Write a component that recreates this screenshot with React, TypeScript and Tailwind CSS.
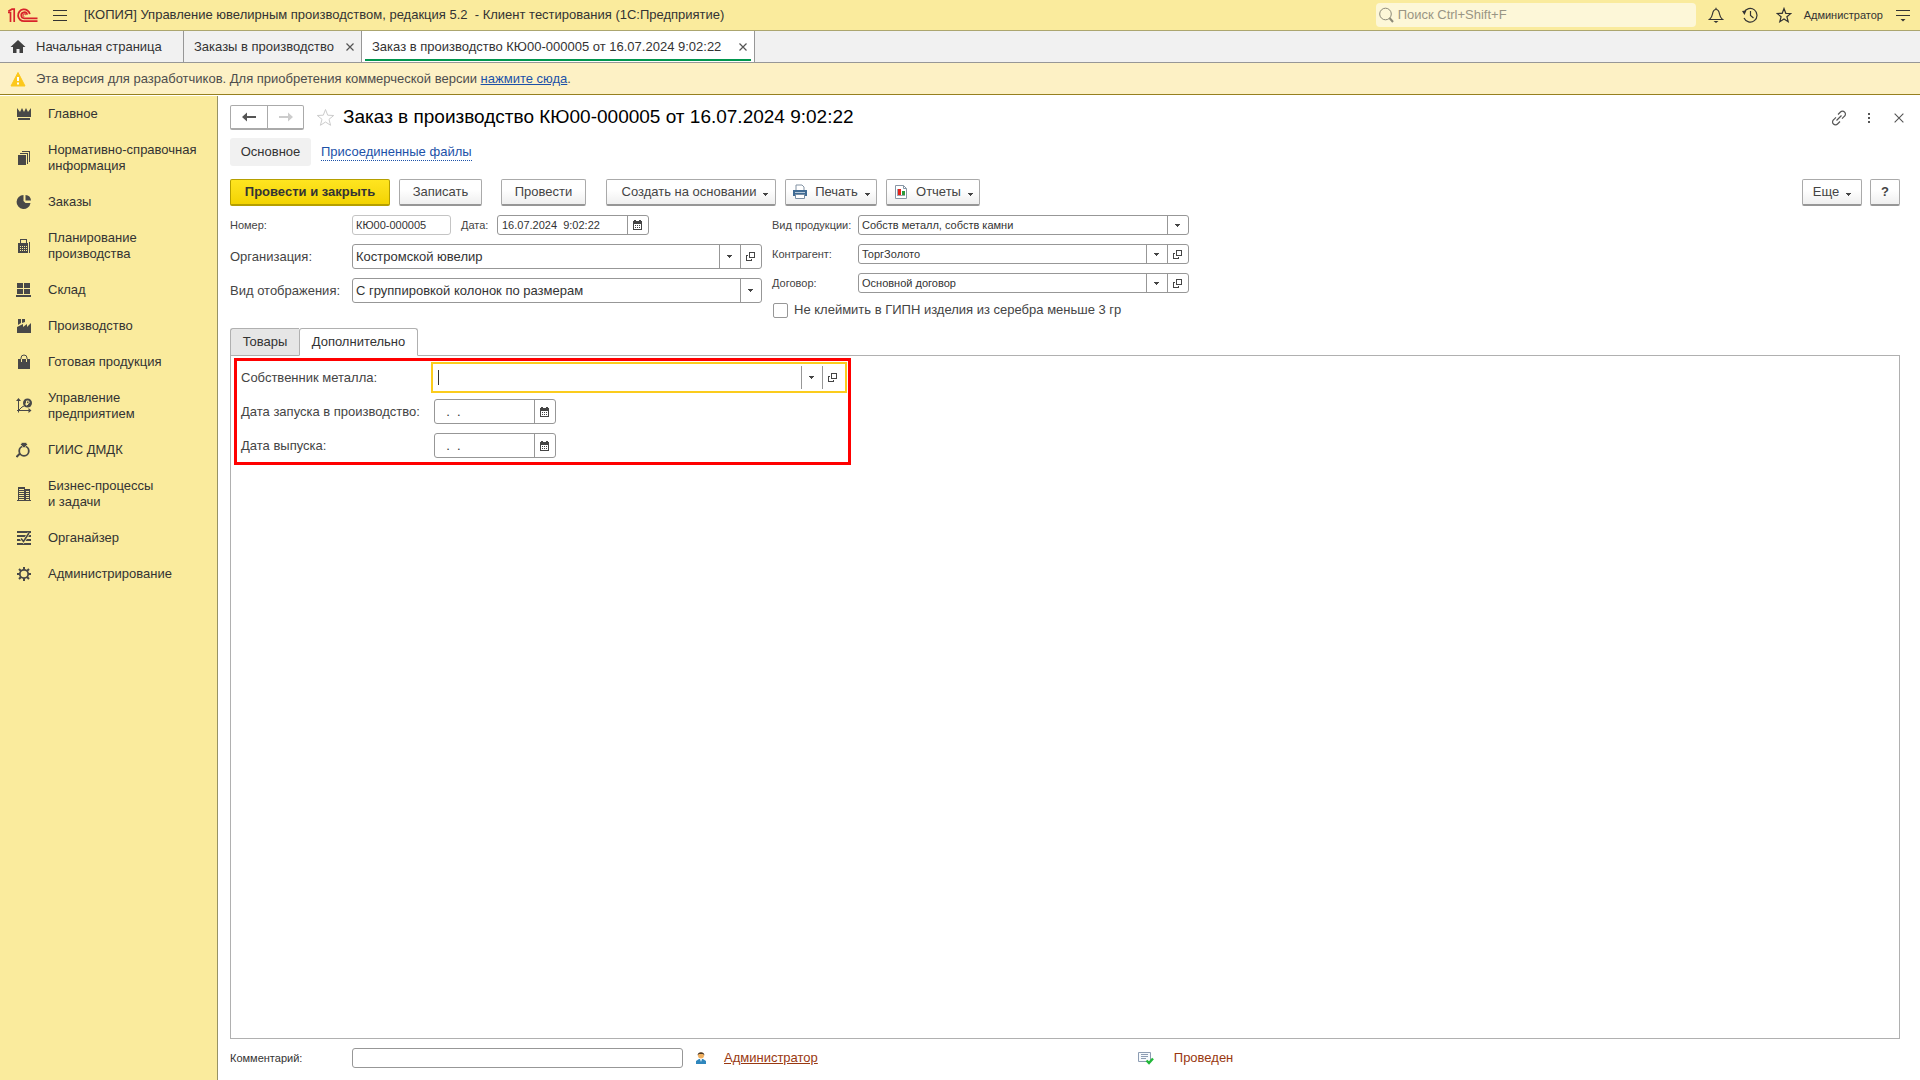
// libs
import { useState } from "react";

// types
import type { JSX, ReactNode } from "react";

const inputText = "bg-transparent outline-none min-w-0";

interface SvgProps {
  size?: number;
  className?: string;
  children: ReactNode;
}

const Svg = ({ size = 16, className = "", children }: SvgProps): JSX.Element => (
  <svg
    className={`shrink-0 ${className}`}
    width={size}
    height={size}
    viewBox={`0 0 ${size} ${size}`}
    fill="currentColor"
    aria-hidden="true"
  >
    {children}
  </svg>
);

const Logo = (): JSX.Element => (
  <svg width="30" height="15" viewBox="0 0 30 15" fill="none" stroke="#d8232a" aria-hidden="true">
    <path d="M0 4.500h2.500V14M0.300 3.200L4 1.200h2.200V14" strokeWidth="1.700" />
    <path
      d="M21.800 6.200A5.900 5.900 0 1 0 16.200 13.200H29.500M19.200 6.600A3 3 0 1 0 16.300 10.300H29.500"
      strokeWidth="1.800"
    />
    <path d="M17.600 7.200a1.300 1.300 0 1 0-1.300 1.300" strokeWidth="1" />
  </svg>
);

const CaretDown = ({ className = "" }: { className?: string }): JSX.Element => (
  <svg
    className={`shrink-0 ${className}`}
    width="5"
    height="3"
    viewBox="0 0 5 3"
    fill="#444"
    shapeRendering="crispEdges"
    aria-hidden="true"
  >
    <path d="M0 0h5v1H4v1H3v1H2V2H1V1H0z" />
  </svg>
);

const OpenIcon = (): JSX.Element => (
  <svg
    width="9"
    height="9"
    viewBox="0 0 9 9"
    fill="none"
    stroke="#444"
    shapeRendering="crispEdges"
    aria-hidden="true"
  >
    <path d="M3.500.500h5v5h-5zM2 3.500H.500v5h5V7" />
  </svg>
);

const CalendarIcon = (): JSX.Element => (
  <svg width="9" height="10" viewBox="0 0 9 10" fill="#444" shapeRendering="crispEdges" aria-hidden="true">
    <path
      fillRule="evenodd"
      d="M0 1h1V0h2v1h3V0h2v1h1v9H0zM1 4v5h7V4zM2 5h1v1H2zM4 5h1v1H4zM6 5h1v1H6zM2 7h1v1H2zM4 7h1v1H4zM6 7h1v1H6z"
    />
  </svg>
);

const CloseIcon = ({ size = 8 }: { size?: number }): JSX.Element => (
  <svg width={size} height={size} viewBox="0 0 8 8" stroke="#555" fill="none" aria-hidden="true">
    <path d="M.5.5l7 7M7.5.5l-7 7" strokeWidth={size > 8 ? 0.9 : 1.2} />
  </svg>
);

interface Section {
  title: string[];
  icon: ReactNode;
}

const sections: Section[] = [
  {
    title: ["Главное"],
    icon: <path d="M1 2l3 4 2-4 2 4 2-4 2 4 3-4v9H1zM2 12h12v2H2z" />,
  },
  {
    title: ["Нормативно-справочная", "информация"],
    icon: (
      <g shapeRendering="crispEdges">
        <path d="M2 5h8v10H2z" />
        <path d="M4 3h8v11h-1V4H4zM6 1h8v11h-1V2H6z" />
      </g>
    ),
  },
  {
    title: ["Заказы"],
    icon: <path d="M7.500 1a7 7 0 1 0 7 8H9.500L7.500 7zM9.500 1v5.500H15A6 6 0 0 0 9.500 1z" />,
  },
  {
    title: ["Планирование", "производства"],
    icon: (
      <g shapeRendering="crispEdges">
        <path
          fillRule="evenodd"
          d="M4 1h7v4h1v10H2V5h2zM5 2v3h5V2zM4 8h1v1H4zM6 8h1v1H6zM8 8h1v1H8zM10 8h1v1h-1zM4 10h1v1H4zM6 10h1v1H6zM8 10h1v1H8zM10 10h1v1h-1zM4 12h1v1H4zM6 12h1v1H6zM8 12h1v1H8zM10 12h1v1h-1z"
        />
        <path d="M13 4h1v11h-1z" />
      </g>
    ),
  },
  {
    title: ["Склад"],
    icon: (
      <path shapeRendering="crispEdges" d="M1 1h6v5H1zM8 1h6v5H8zM1 7h6v5H1zM8 7h6v5H8zM0 13h15v2H0z" />
    ),
  },
  {
    title: ["Производство"],
    icon: <path d="M2 1h3v4L2 7zM6 1h3v3L6 5zM1 9l6-3v3l4-3v3l4-4v10H1z" />,
  },
  {
    title: ["Готовая продукция"],
    icon: (
      <>
        <path d="M2 5h12v10H2z" />
        <path d="M5 8V4a3 3 0 0 1 6 0v4" fill="none" stroke="currentColor" />
        <path d="M5.500 5v3M10.500 5v3" stroke="#faeb9d" />
      </>
    ),
  },
  {
    title: ["Управление", "предприятием"],
    icon: (
      <>
        <path d="M2.500 2v12.500M1 12.500h13M3 12l3-3 2-1" fill="none" stroke="currentColor" />
        <path d="M2.500 0L5 3H0zM15.500 12.500L12.500 10v5z" />
        <circle cx="11.500" cy="5" r="4.500" />
        <path d="M10.500 7.500V3h1.500a1.200 1.200 0 0 1 0 2.400H9.500M9.500 6.500H12" fill="none" stroke="#faeb9d" />
      </>
    ),
  },
  {
    title: ["ГИИС ДМДК"],
    icon: (
      <>
        <circle cx="8" cy="9" r="4.800" fill="none" stroke="currentColor" strokeWidth="1.800" />
        <path d="M4 11.500L.5 15" stroke="currentColor" strokeWidth="2" />
        <path d="M8 6L4.500 2.500 6 .5h4l1.500 2z" stroke="#faeb9d" strokeWidth=".6" />
      </>
    ),
  },
  {
    title: ["Бизнес-процессы", "и задачи"],
    icon: (
      <path
        shapeRendering="crispEdges"
        fillRule="evenodd"
        d="M2 1h7v2h5v11h1v1H1v-1h1zM3 3v1h5V3zM3 5v1h5V5zM3 7v1h5V7zM3 9v1h5V9zM3 11v1h5v-1zM3 13v1h5v-1zM10 5v1h3V5zM10 7v1h3V7zM10 9v1h3V9zM10 11v1h3v-1zM10 13v1h3v-1z"
      />
    ),
  },
  {
    title: ["Органайзер"],
    icon: (
      <>
        <path shapeRendering="crispEdges" d="M1 1h14v2H1zM1 5h14v2H1zM1 9h14v2H1zM1 13h14v2H1z" />
        <path d="M5 8.500l2.500 3L13 3" fill="none" stroke="#faeb9d" strokeWidth="3" />
        <path d="M5 8.500l2.500 3L13 3" fill="none" stroke="currentColor" strokeWidth="1.600" />
      </>
    ),
  },
  {
    title: ["Администрирование"],
    icon: (
      <>
        <circle cx="8" cy="8" r="4.200" fill="none" stroke="currentColor" strokeWidth="1.800" />
        <path
          d="M8 1v3M8 12v3M1 8h3M12 8h3M3 3l2.200 2.200M10.800 10.800L13 13M13 3l-2.200 2.200M5.200 10.800L3 13"
          stroke="currentColor"
          strokeWidth="2"
        />
      </>
    ),
  },
];

const TitleBar = (): JSX.Element => (
  <header className="flex h-[31px] items-center border-b border-[#aca66f] bg-[#faeb9d] pr-[9px] pl-2 text-[13px] text-[#333]">
    <Logo />
    <button type="button" aria-label="Меню" className="ml-[14px]">
      <Svg>
        <path shapeRendering="crispEdges" d="M1 3h14v1H1zM1 8h14v1H1zM1 13h14v1H1z" />
      </Svg>
    </button>
    <h1 className="ml-4 whitespace-pre">
      [КОПИЯ] Управление ювелирным производством, редакция 5.2{"  "}- Клиент тестирования
      (1С:Предприятие)
    </h1>
    <label className="ml-auto flex h-6 w-80 items-center gap-1 rounded-sm bg-[#fdf7d8] pl-[3px] text-[#8d8a79]">
      <svg width="15" height="16" viewBox="0 0 15 16" fill="none" stroke="currentColor" aria-hidden="true">
        <circle cx="6.500" cy="7" r="5.800" />
        <path d="M10.500 11l3.500 4" strokeWidth="2" />
      </svg>
      <input
        className={`flex-1 ${inputText} placeholder:text-[#999584]`}
        aria-label="Поиск"
        placeholder="Поиск Ctrl+Shift+F"
      />
    </label>
    <button type="button" aria-label="Уведомления" className="ml-3">
      <Svg>
        <path
          d="M1.500 12.500h13c-2-1.500-2.500-3-3-5.500C11 4 10 2.500 8 2.500S5 4 4.500 7c-.5 2.500-1 4-3 5.500zM8 .8v1.700"
          fill="none"
          stroke="currentColor"
          strokeWidth="1.200"
        />
        <path d="M5.500 14h5L8 16z" />
      </Svg>
    </button>
    <button type="button" aria-label="История" className="ml-[18px]">
      <Svg>
        <path
          d="M2 5.500A6.800 6.800 0 1 1 2 11M8.500 4v4.500l3 2.500"
          fill="none"
          stroke="currentColor"
          strokeWidth="1.200"
        />
        <path d="M0 4l4.500-.5L2.500 8z" />
      </Svg>
    </button>
    <button type="button" aria-label="Избранное" className="ml-[18px]">
      <Svg>
        <path
          d="M8 1.500l1.800 4.800 5 .2-3.900 3.200 1.300 5L8 12l-4.200 2.700 1.300-5L1.200 6.500l5-.2z"
          fill="none"
          stroke="currentColor"
          strokeWidth="1.200"
        />
      </Svg>
    </button>
    <button type="button" className="ml-3 text-[11px]">
      Администратор
    </button>
    <button type="button" aria-label="Сервис" className="ml-3">
      <Svg>
        <path shapeRendering="crispEdges" d="M1 3h14v1H1zM1 8h14v1H1z" />
        <path d="M5.500 12h5L8 14.500z" />
      </Svg>
    </button>
  </header>
);

const WindowTabs = (): JSX.Element => (
  <nav className="flex h-8 border-b border-[#979797] bg-[#f1f1f1] text-[13px] text-[#333]">
    <button type="button" className="flex min-w-[184px] items-center border-r border-[#979797] pl-[10px]">
      <Svg className="mr-[10px] text-[#404040]">
        <path d="M8 1l7.500 7H13v6H9.500v-4h-3v4H3V8H.5z" />
      </Svg>
      Начальная страница
    </button>
    <div className="flex min-w-[178px] items-center justify-between border-r border-[#979797] pr-[7px] pl-[10px]">
      <button type="button">Заказы в производство</button>
      <button type="button" aria-label="Закрыть вкладку">
        <CloseIcon />
      </button>
    </div>
    <div className="flex min-w-[393px] border-r border-[#979797] bg-white px-[3px]">
      <div className="mb-px flex flex-1 items-center justify-between border-b-2 border-[#00964e] pt-[3px] pr-1 pl-[7px]">
        <button type="button">Заказ в производство КЮ00-000005 от 16.07.2024 9:02:22</button>
        <button type="button" aria-label="Закрыть вкладку">
          <CloseIcon />
        </button>
      </div>
    </div>
  </nav>
);

const Sidebar = (): JSX.Element => (
  <nav className="mt-px w-[218px] shrink-0 border-r border-[#979264] bg-[#faeb9d]">
    <ul>
      {sections.map(({ title, icon }) => (
        <li key={title[0]}>
          <button
            type="button"
            className="flex w-full items-center gap-4 py-[10px] pl-4 text-left text-[13px] leading-4 text-[#333]"
          >
            <Svg className="text-[#484848]">{icon}</Svg>
            <span>
              {title.map((line) => (
                <span key={line} className="block">
                  {line}
                </span>
              ))}
            </span>
          </button>
        </li>
      ))}
    </ul>
  </nav>
);

interface ToolButtonProps {
  className?: string;
  primary?: boolean;
  menu?: boolean;
  children: ReactNode;
}

const ToolButton = ({ className = "", primary, menu, children }: ToolButtonProps): JSX.Element => (
  <button
    type="button"
    className={`flex h-[27px] items-center justify-center rounded-xs border border-b-2 text-[13px] ${
      primary
        ? "border-[#b59f00] bg-linear-to-b from-[#ffe51f] to-[#f3d300] font-bold text-[#333]"
        : "border-[#aaa] border-b-[#969696] bg-linear-to-b from-white from-40% to-[#efefef] text-[#444]"
    } ${className}`}
  >
    {children}
    {menu && <CaretDown className="mt-1 ml-[7px]" />}
  </button>
);

interface FieldProps {
  id: string;
  value: string;
  tall?: boolean;
  openable?: boolean;
  className?: string;
}

const SelectField = ({ id, value, tall, openable, className = "" }: FieldProps): JSX.Element => (
  <div
    className={`flex overflow-hidden rounded-[3px] border border-[#979797] bg-white ${
      tall ? "h-[25px] text-[13px]" : "h-5 text-[11px]"
    } ${className}`}
  >
    <div className="relative flex min-w-0 flex-1">
      <select id={id} className={`w-full appearance-none pr-6 pl-[3px] text-[#333] ${inputText}`}>
        <option>{value}</option>
      </select>
      <span className="pointer-events-none absolute inset-y-0 right-0 flex w-[21px] items-center justify-center border-l border-[#979797] pr-px">
        <CaretDown />
      </span>
    </div>
    {openable && (
      <button
        type="button"
        aria-label="Открыть"
        className="flex w-[21px] items-center justify-center border-l border-[#979797] pr-px"
      >
        <OpenIcon />
      </button>
    )}
  </div>
);

const DateField = ({ id, value, tall, className = "" }: FieldProps): JSX.Element => {
  const [text, setText] = useState(value);

  return (
    <div
      className={`flex overflow-hidden rounded-[3px] border border-[#979797] bg-white ${
        tall ? "h-[25px] text-[13px]" : "h-5 text-[11px]"
      } ${className}`}
    >
      <input
        id={id}
        className={`flex-1 pl-1 text-[#333] ${inputText}`}
        value={text}
        onChange={(e) => setText(e.target.value)}
      />
      <button
        type="button"
        aria-label="Выбрать дату"
        className="flex w-[21px] items-center justify-center border-l border-[#979797] pr-px"
      >
        <CalendarIcon />
      </button>
    </div>
  );
};

const FormHeader = (): JSX.Element => (
  <div className="flex h-[25px] items-center">
    <div className="flex h-[25px] rounded-xs border border-b-2 border-[#aaa]">
      <button type="button" aria-label="Назад" className="flex w-9 items-center justify-center text-[#555]">
        <Svg>
          <path d="M1 8l5-4.500V7h9v2H6v3.500z" />
        </Svg>
      </button>
      <button
        type="button"
        aria-label="Вперед"
        className="flex w-9 items-center justify-center border-l border-[#aaa] text-[#ccc]"
      >
        <Svg>
          <path d="M15 8l-5-4.500V7H1v2h9v3.500z" />
        </Svg>
      </button>
    </div>
    <button type="button" aria-label="В избранное" className="ml-3 text-[#ccc]">
      <Svg size={19}>
        <path
          d="M9.500 1.500l2.200 5.700 6 .3-4.700 3.800 1.600 6-5.100-3.300-5.100 3.300 1.600-6L1.300 7.500l6-.3z"
          fill="none"
          stroke="currentColor"
        />
      </Svg>
    </button>
    <h2 className="ml-2 pb-px text-[19px] leading-6 text-black">
      Заказ в производство КЮ00-000005 от 16.07.2024 9:02:22
    </h2>
    <div className="-mr-[7px] ml-auto flex items-center gap-[14px] text-[#555]">
      <button type="button" aria-label="Получить ссылку">
        <Svg>
          <path
            d="M7 4.500l2.500-2.500a2.800 2.800 0 0 1 4 0 2.800 2.800 0 0 1 0 4.200L11 8.700M9 11.500L6.500 14a2.800 2.800 0 0 1-4 0 2.800 2.800 0 0 1 0-4.200L5 7.300M5.500 10.500l5-5"
            fill="none"
            stroke="currentColor"
            strokeWidth="1.200"
          />
        </Svg>
      </button>
      <button type="button" aria-label="Еще">
        <Svg>
          <path shapeRendering="crispEdges" d="M7 3h2v2H7zM7 7h2v2H7zM7 11h2v2H7z" />
        </Svg>
      </button>
      <button type="button" aria-label="Закрыть" className="flex size-4 items-center justify-center">
        <CloseIcon size={10} />
      </button>
    </div>
  </div>
);

const Toolbar = (): JSX.Element => (
  <div className="mt-[13px] flex">
    <ToolButton primary className="w-40">
      Провести и закрыть
    </ToolButton>
    <ToolButton className="ml-[9px] w-[83px]">Записать</ToolButton>
    <ToolButton className="ml-[19px] w-[85px]">Провести</ToolButton>
    <ToolButton menu className="ml-5 w-[170px] pl-2">
      Создать на основании
    </ToolButton>
    <ToolButton menu className="ml-[9px] w-[92px]">
      <Svg className="mr-[7px]">
        <path d="M4 6V1h6l2 2v3" fill="#fff" stroke="#8292a3" />
        <path d="M1 6h14v6H1z" fill="#3f6b94" />
        <path d="M3 8h10v1H3z" fill="#b7cadb" />
        <path d="M3.500 10.500h9v4h-9z" fill="#fff" stroke="#7a8ea3" />
      </Svg>
      Печать
    </ToolButton>
    <ToolButton menu className="ml-[9px] w-[94px]">
      <Svg className="mr-[7px]">
        <path d="M2.500 1.500h8l3 3v10h-11z" fill="#fff" stroke="#8796a5" />
        <path d="M10.500 1.500v3h3" fill="none" stroke="#8796a5" />
        <path d="M4 5h1v7H4zM4 11h8v1H4z" fill="#9aa6b2" />
        <path d="M5 5h3v6H5z" fill="#e3231b" />
        <path d="M9 7h3v4H9z" fill="#2c9a3a" />
      </Svg>
      Отчеты
    </ToolButton>
    <ToolButton menu className="ml-auto w-[60px]">
      Еще
    </ToolButton>
    <ToolButton className="ml-2 w-[30px] font-bold">?</ToolButton>
  </div>
);

const DocumentFields = (): JSX.Element => (
  <div className="mt-[9px] flex gap-[10px] text-[#444]">
    <div className="flex w-[532px] flex-col gap-[9px]">
      <div className="flex items-center text-[11px]">
        <label htmlFor="number" className="w-[122px]">
          Номер:
        </label>
        <input
          id="number"
          readOnly
          defaultValue="КЮ00-000005"
          className="h-5 w-[99px] rounded-[3px] border border-[#c4c4c4] px-[3px] text-[#333] outline-none"
        />
        <label htmlFor="date" className="w-[46px] pl-[10px]">
          Дата:
        </label>
        <DateField id="date" value="16.07.2024  9:02:22" className="w-[152px]" />
      </div>
      <div className="flex items-center text-[13px]">
        <label htmlFor="organization" className="w-[122px] whitespace-nowrap">
          Организация:
        </label>
        <SelectField id="organization" value="Костромской ювелир" tall openable className="w-[410px]" />
      </div>
      <div className="flex items-center text-[13px]">
        <label htmlFor="view" className="w-[122px] whitespace-nowrap">
          Вид отображения:
        </label>
        <SelectField id="view" value="С группировкой колонок по размерам" tall className="w-[410px]" />
      </div>
    </div>
    <div className="flex w-[417px] flex-col gap-[9px] text-[11px]">
      <div className="flex items-center">
        <label htmlFor="kind" className="w-[86px] whitespace-nowrap">
          Вид продукции:
        </label>
        <SelectField id="kind" value="Собств металл, собств камни" className="flex-1" />
      </div>
      <div className="flex items-center">
        <label htmlFor="partner" className="w-[86px]">
          Контрагент:
        </label>
        <SelectField id="partner" value="ТоргЗолото" openable className="flex-1" />
      </div>
      <div className="flex items-center">
        <label htmlFor="contract" className="w-[86px]">
          Договор:
        </label>
        <SelectField id="contract" value="Основной договор" openable className="flex-1" />
      </div>
      <label className="flex h-4 items-center gap-[6px] pl-px text-[13px] whitespace-nowrap">
        <input type="checkbox" className="size-[15px] appearance-none rounded-xs border border-[#979797] bg-white" />
        Не клеймить в ГИПН изделия из серебра меньше 3 гр
      </label>
    </div>
  </div>
);

const ExtraPanel = (): JSX.Element => (
  <div className="m-[3px] mt-[2px] w-[617px] border-3 border-[#f00] pt-px pb-1 pl-1 text-[13px] text-[#444]">
    <div className="flex items-center">
      <label htmlFor="owner" className="w-[190px]">
        Собственник металла:
      </label>
      <div className="relative flex h-[31px] w-[416px] border-2 border-[#fbcc1d] py-[2px]">
        <input id="owner" className={`flex-1 pl-1 caret-transparent ${inputText}`} />
        <span className="absolute top-[6px] left-[5px] h-[15px] w-px bg-[#333]" />
        <button
          type="button"
          aria-label="Выбрать"
          className="flex w-[21px] items-center justify-center border-l border-[#979797] pr-px"
        >
          <CaretDown />
        </button>
        <button
          type="button"
          aria-label="Открыть"
          className="flex w-[23px] items-center justify-center border-l border-[#979797] pr-[3px]"
        >
          <OpenIcon />
        </button>
      </div>
    </div>
    <div className="mt-[6px] flex items-center">
      <label htmlFor="start" className="w-[193px] whitespace-nowrap">
        Дата запуска в производство:
      </label>
      <DateField id="start" value="  .  ." tall className="w-[122px]" />
    </div>
    <div className="mt-[9px] flex items-center">
      <label htmlFor="release" className="w-[193px]">
        Дата выпуска:
      </label>
      <DateField id="release" value="  .  ." tall className="w-[122px]" />
    </div>
  </div>
);

const StatusRow = (): JSX.Element => (
  <footer className="mt-[9px] mb-3 flex h-5 items-center text-[13px]">
    <label htmlFor="comment" className="w-[122px] text-[11px] text-[#333]">
      Комментарий:
    </label>
    <input id="comment" className="h-5 w-[331px] rounded-[3px] border border-[#979797] px-1 outline-none" />
    <svg className="ml-3" width="12" height="14" viewBox="0 0 12 14" aria-hidden="true">
      <path d="M1 13V10l3-2h4l3 2v3z" fill="#2f87bd" />
      <path d="M5 8h2l-1 3z" fill="#fff" />
      <circle cx="6" cy="4.500" r="3" fill="#f0b060" />
      <path d="M2.500 4.500C2.500 0 9.500 0 9.500 4.500L8 3H4z" fill="#4c3a2a" />
    </svg>
    <a href="#admin" className="ml-[17px] text-[#993810] underline">
      Администратор
    </a>
    <Svg className="ml-80">
      <path d="M.5 2.500h12v9H.5z" fill="#f6f9fc" stroke="#8d9db3" />
      <path shapeRendering="crispEdges" d="M3 4h7v1H3zM3 6h7v1H3zM3 8h5v1H3z" fill="#8d9db3" />
      <path d="M8.500 10.500l2.500 2.500 4-4.500" fill="none" stroke="#22b83a" strokeWidth="2.400" />
    </Svg>
    <span className="ml-5 text-[#993810]">Проведен</span>
  </footer>
);

const App = (): JSX.Element => {
  const [tab, setTab] = useState("extra");

  return (
    <div className="flex min-h-screen flex-col bg-white font-['Liberation_Sans',Arial,sans-serif]">
      <TitleBar />
      <WindowTabs />
      <div className="flex h-8 items-center border-b border-[#96801f] bg-[#fdf1c5] pl-[10px] text-[13px] text-[#4d4d4d]">
        <Svg className="mr-[10px]">
          <path d="M8 1.500L15 15H1z" fill="#fcc81c" stroke="#fcc81c" strokeLinejoin="round" />
          <path d="M7 6h2v4H7zM7 11.500h2v2H7z" fill="#fff" />
        </Svg>
        <p>
          Эта версия для разработчиков. Для приобретения коммерческой версии{" "}
          <a href="#buy" className="text-[#1c51a8] underline">
            нажмите сюда
          </a>
          .
        </p>
      </div>
      <div className="flex flex-1">
        <Sidebar />
        <main className="flex min-w-0 flex-1 flex-col pt-[10px] pr-5 pl-3">
          <FormHeader />
          <div className="mt-2 flex h-7 items-center gap-[10px] text-[13px]">
            <button type="button" className="h-7 w-[81px] rounded-[3px] bg-[#f1f1f1] text-[#333]">
              Основное
            </button>
            <a href="#files" className="border-b border-dotted border-[#1c51a8] leading-4 text-[#1c51a8]">
              Присоединенные файлы
            </a>
          </div>
          <Toolbar />
          <DocumentFields />
          <div role="tablist" className="mt-[10px] flex h-7 text-[13px] text-[#333]">
            <button
              type="button"
              role="tab"
              aria-selected={tab === "goods"}
              onClick={() => setTab("goods")}
              className={`w-[69px] rounded-tl-[3px] border border-r-0 border-[#b0b0b0] ${
                tab === "goods" ? "border-b-white bg-white" : "bg-[#e6e6e6]"
              }`}
            >
              Товары
            </button>
            <button
              type="button"
              role="tab"
              aria-selected={tab === "extra"}
              onClick={() => setTab("extra")}
              className={`w-[119px] rounded-t-[3px] border border-[#b0b0b0] ${
                tab === "extra" ? "border-b-white bg-white" : "bg-[#e6e6e6]"
              }`}
            >
              Дополнительно
            </button>
            <div className="flex-1 border-b border-[#b0b0b0]" />
          </div>
          <div className="flex-1 border border-t-0 border-[#b0b0b0]">{tab === "extra" && <ExtraPanel />}</div>
          <StatusRow />
        </main>
      </div>
    </div>
  );
};

export default App;
